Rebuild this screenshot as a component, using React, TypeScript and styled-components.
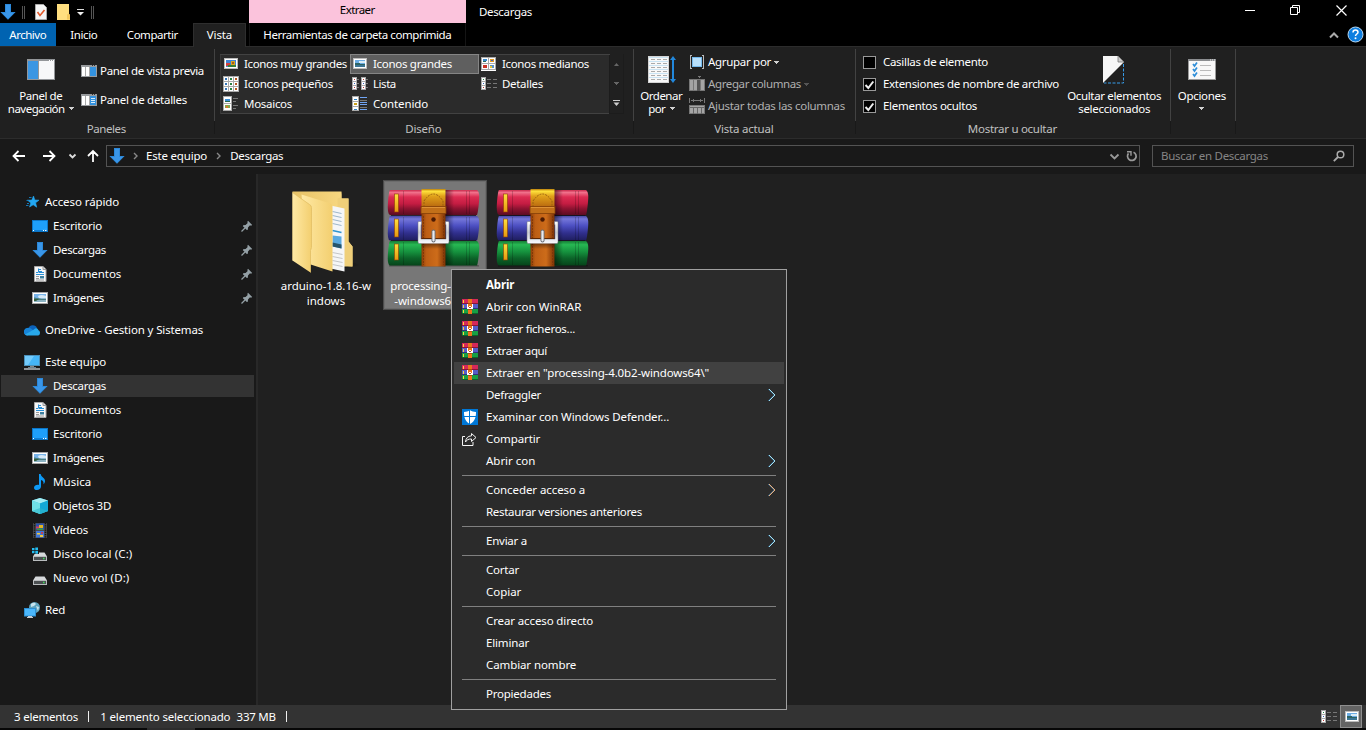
import React, { useLayoutEffect, useRef } from 'react';
import styled, { createGlobalStyle, css } from 'styled-components';

const Global = createGlobalStyle`
  * { box-sizing: border-box; }
  html, body { margin: 0; padding: 0; background: #000; overflow: hidden; }
  svg { display: block; flex: none; }
`;

/* ---------- text ---------- */

const TextSpan = styled.span<{ $color?: string; $bold?: boolean }>`
  display: inline-block;
  white-space: pre;
  color: ${(p) => p.$color || 'inherit'};
  font-weight: ${(p) => (p.$bold ? 700 : 400)};
`;

/* Tracks its text so that it spans the given width. */
function Text({ w, children, color, bold }: { w: number; children: string; color?: string; bold?: boolean }) {
  const ref = useRef<HTMLSpanElement>(null);
  useLayoutEffect(() => {
    const el = ref.current;
    if (!el) return;
    el.style.letterSpacing = '0px';
    el.style.marginRight = '0px';
    const gap = (w + 0.3 - el.getBoundingClientRect().width) / Math.max(1, children.length - 1);
    el.style.letterSpacing = `${gap}px`;
    el.style.marginRight = `${-gap}px`;
  }, [w, children]);
  return <TextSpan ref={ref} $color={color} $bold={bold}>{children}</TextSpan>;
}

/* ---------- icons ---------- */

const DownArrow = ({ size = 16 }: { size?: number }) => (
  <svg width={size} height={size} viewBox="0 0 16 16">
    <path d="M5 0h6v8h4.6L8 15.8.4 8H5z" fill="#3a96e8" />
    <path d="M5.5.5h5v8h4L8 15 1.500 8.500h4z" fill="none" stroke="#2583d2" strokeWidth="0.7" />
  </svg>
);

const Star = () => (
  <svg width="16" height="16" viewBox="0 0 16 16">
    <path d="M9.500 2l1.300 4 4.200.2-3.400 2.600 1.100 4.400-3.500-2.400-3.700 2.200 1.300-4.100L3.600 6.200l4.200-.1z" fill="#22a7f2" stroke="#22a7f2" strokeWidth=".6" />
    <path d="M5 3.500h2.500M2.500 6.500h2M3 9.500h2M2 11.500h2.500" stroke="#1476b4" strokeWidth="1" />
  </svg>
);

const Desktop = () => (
  <svg width="16" height="16" viewBox="0 0 16 16">
    <rect x="0.500" y="2.500" width="15" height="11" fill="#1e9ffa" stroke="#0b76c8" />
    <path d="M15 3v7L5 13H15z" fill="#38acff" opacity=".5" />
    <path d="M1 12.500h14" stroke="#0f7ed4" />
    <path d="M1 12.500h1M11 12.500h1M13 12.500h1.500" stroke="#fff" />
  </svg>
);

const Doc = () => (
  <svg width="16" height="16" viewBox="0 0 16 16">
    <path d="M2.500.5h8.500l3 3v12H2.500z" fill="#f7f7f7" stroke="#a9a9a9" />
    <path d="M11 .5v3h3" fill="#ddd" stroke="#999" />
    <path d="M4 6.500h2M7 3.500h2M6 5.500h4M7 6.500h5M4 8.500h8" stroke="#2a8fd6" />
    <path d="M6.500 2.500v4" stroke="#2a8fd6" strokeWidth="1" />
    <path d="M4 10.500h3M4 12.500h3M4 14h8" stroke="#9a9a9a" />
    <path d="M8 10h4v2.500H8z" fill="#3d7f9f" />
  </svg>
);

const Picture = () => (
  <svg width="16" height="16" viewBox="0 0 16 16">
    <rect x="0.500" y="2.500" width="15" height="11" fill="#fff" stroke="#a8a8a8" />
    <rect x="2" y="4" width="12" height="8" fill="#79b4ea" />
    <path d="M6 6q3-2 8 0v2.500H7z" fill="#d7eaf8" />
    <path d="M2 7.500c3 0 4 1.500 12 1.200V10H2z" fill="#4b7d80" />
    <path d="M2 10h12v2H2z" fill="#8db4c4" />
    <path d="M2 9h5l-3 2H2z" fill="#345f3d" />
  </svg>
);

const Music = () => (
  <svg width="16" height="16" viewBox="0 0 16 16">
    <path d="M7 0h1.700c.2 3.200 4.600 3.800 4.300 7.200-.1 1.400-.8 2.300-1.500 3 .4-2.300-.4-3.700-2.500-4.300v6.600C9 14.800 7 16 5 16c-1.800 0-3-.9-3-2.300 0-2 2.500-3.300 5-2.800z" fill="#0d99f5" />
  </svg>
);

const Cube = () => (
  <svg width="16" height="16" viewBox="0 0 16 16">
    <path d="M8 0l8 2.500v10.500L8 16 0 13V2.500z" fill="#37c3dc" />
    <path d="M8 0l8 2.500L8 5.500 0 2.500z" fill="#a5edf3" />
    <path d="M0 2.500l8 3V16l-8-3z" fill="#6fe0e6" />
    <path d="M16 2.500l-8 3V16l8-3z" fill="#13a9d6" />
    <path d="M0 13l8-3 8 3-8 3z" fill="#2fb5c9" opacity=".6" />
  </svg>
);

const Film = () => (
  <svg width="16" height="16" viewBox="0 0 16 16">
    <rect x="1" y="1" width="14" height="15" fill="#4b4b4b" />
    <path d="M2.500 1v15M13.500 1v15" stroke="#111" strokeWidth="1.500" strokeDasharray="1.200 1" />
    <rect x="4" y="1.500" width="8" height="6.500" fill="#2a51ad" />
    <rect x="4" y="9" width="8" height="6.500" fill="#3f77d8" />
    <path d="M4 4.500h3v2H4z" fill="#d23a62" /><path d="M7 3h4v3H7z" fill="#e2b422" /><path d="M5 6.500h6V8H5z" fill="#3b9a42" />
    <path d="M5 11h3v1.500H5zM8 13h3v2H8z" fill="#f0c83a" /><path d="M9 10h2v2H9z" fill="#c44055" />
  </svg>
);

const Drive = ({ windows }: { windows?: boolean }) => (
  <svg width="16" height="16" viewBox="0 0 16 16">
    <path d="M3.500 6.500h9L15 10.500H1z" fill="#d6d9db" />
    <rect x="1.500" y="10.500" width="13" height="4" fill="#4c5052" stroke="#b9bcbe" />
    <path d="M11 12.500h1.500" stroke="#3ee05a" strokeWidth="1.300" />
    {windows && (
      <>
        <rect x="0" y="1" width="7" height="7" fill="#191919" />
        <path d="M0 2h2.500v2.300H0zM3.300 1.500H6v2.800H3.300zM0 5h2.500v2.300H0zM3.300 5H6v2.700H3.300z" fill="#25bdf0" />
      </>
    )}
  </svg>
);

const Network = () => (
  <svg width="16" height="16" viewBox="0 0 16 16">
    <circle cx="10.500" cy="5.500" r="5.500" fill="#5da3bd" />
    <path d="M7 2q3-2.500 5 0l-2 2-3 1zM12 4l3 1-1 4z" fill="#c8e4ee" />
    <rect x="0.500" y="6.500" width="11" height="7.500" fill="#4bb7fb" stroke="#2d8fd2" />
    <path d="M4 14.500h4M3 15.500h6" stroke="#c7ccd0" />
  </svg>
);

const Monitor = () => (
  <svg width="16" height="16" viewBox="0 0 16 16">
    <rect x="0.500" y="1.500" width="15" height="10" fill="#45b5f8" stroke="#4b8fb8" />
    <path d="M1 2h9L4 11H1z" fill="#86d3fc" opacity=".7" />
    <path d="M6 12.500h4" stroke="#888" />
    <path d="M0 15h16" stroke="#c3cbd0" strokeWidth="1.400" />
    <path d="M4 13.500h8" stroke="#6c8290" />
  </svg>
);

const Cloud = () => (
  <svg width="16" height="16" viewBox="0 0 16 16">
    <path d="M4.500 6.500A4.500 4.500 0 0 1 13 6.200L12 9 6 10z" fill="#0b62ba" />
    <path d="M3 13.500A3.600 3.600 0 0 1 .3 8C1.500 5.500 5 5 7 6.500l5 4z" fill="#1784d8" />
    <path d="M10 7.500c1.500-2 4-1.200 4.400.8 2.200.6 2.200 4.700-.4 5.200H3L1 12.500z" fill="#28a8ea" />
  </svg>
);

const Pin = () => (
  <svg width="12" height="12" viewBox="0 0 12 12">
    <path d="M7 .8L11.200 5 10 5.700 9 5.300 7 7.500 6.800 9.800 5.800 10 1.900 6.200 2.200 5.200 4.600 5 6.700 3 6.300 2z" fill="#94a0a6" />
    <path d="M4 8L.5 11.500" stroke="#94a0a6" strokeWidth="1.300" />
  </svg>
);

/* Full-size archive: three books held by a buckled strap. */
const Archive = () => (
  <svg width="94" height="80" viewBox="0 0 94 80">
    <defs>
      <linearGradient id="red" x2="0" y2="1"><stop offset="0" stopColor="#c92a4c" /><stop offset=".1" stopColor="#f0708a" /><stop offset=".28" stopColor="#dc2c52" /><stop offset=".55" stopColor="#c41c42" /><stop offset=".75" stopColor="#8c1331" /><stop offset="1" stopColor="#5c0c22" /></linearGradient>
      <linearGradient id="blue" x2="0" y2="1"><stop offset="0" stopColor="#4a4ba6" /><stop offset=".12" stopColor="#7577da" /><stop offset=".4" stopColor="#4c4fc2" /><stop offset=".7" stopColor="#302f8c" /><stop offset="1" stopColor="#1f1e5e" /></linearGradient>
      <linearGradient id="green" x2="0" y2="1"><stop offset="0" stopColor="#167d34" /><stop offset=".15" stopColor="#27b853" /><stop offset=".45" stopColor="#15903d" /><stop offset=".7" stopColor="#0c6429" /><stop offset="1" stopColor="#06441a" /></linearGradient>
      <linearGradient id="strap"><stop offset="0" stopColor="#8d3e07" /><stop offset=".2" stopColor="#bd5e14" /><stop offset=".65" stopColor="#cd6c1a" /><stop offset="1" stopColor="#7b3205" /></linearGradient>
      <linearGradient id="gold" x2="0" y2="1"><stop offset="0" stopColor="#b87a08" /><stop offset=".12" stopColor="#ffe23c" /><stop offset=".4" stopColor="#e0a01a" /><stop offset="1" stopColor="#b9690f" /></linearGradient>
      <linearGradient id="tag" x2="0" y2="1"><stop offset="0" stopColor="#ffe03e" /><stop offset="1" stopColor="#e6980e" /></linearGradient>
      <linearGradient id="shade" x2="0" y2="1"><stop offset="0" stopColor="#000" stopOpacity=".4" /><stop offset="1" stopColor="#000" stopOpacity="0" /></linearGradient>
      <linearGradient id="side"><stop offset="0" stopColor="#000" stopOpacity=".5" /><stop offset="1" stopColor="#000" stopOpacity="0" /></linearGradient>
      <linearGradient id="steel" x2="0" y2="1"><stop offset="0" stopColor="#fff" /><stop offset=".5" stopColor="#c9ccd4" /><stop offset="1" stopColor="#fafbff" /></linearGradient>
    </defs>
    <rect x="2" y="77" width="90" height="2.500" rx="1" fill="url(#shade)" />
    <path d="M3 2h87q3 1.500 2 12t-2 13H3Q0 26 1 14T3 2z" fill="url(#red)" />
    <path d="M3 28h87q3 1.500 2 12t-2 12.500H3Q0 52 1 40T3 28z" fill="url(#blue)" />
    <path d="M3 53h87q3 1.500 2 12t-2 12.500H3Q0 77 1 65T3 53z" fill="url(#green)" />
    <path d="M4 27.500h85M4 52.500h85" stroke="#151020" strokeOpacity=".8" />
    <path d="M16.500 3v23M79.500 3v23M82.500 3v23M16.500 29v23M79.500 29v23M82.500 29v23M16.500 54v23M79.500 54v23M82.500 54v23" stroke="#000" strokeOpacity=".18" />
    <g fill="url(#tag)" stroke="#8c3d06" strokeWidth=".6">
      <rect x="7.500" y="6" width="4" height="18" /><rect x="7.500" y="31" width="4" height="18" /><rect x="7.500" y="56" width="4" height="16" />
    </g>
    <rect x="58" y="2" width="9" height="75" fill="url(#side)" />
    <rect x="34.500" y="20" width="24" height="58.500" fill="url(#strap)" />
    <path d="M34.500 1h24v18h-24z" fill="url(#gold)" />
    <path d="M37 19V13q9.500-14 19 0v6" fill="none" stroke="#9c600f" strokeWidth="1" strokeDasharray="2 1" />
    <rect x="34" y="18.500" width="25" height="7" fill="#c27019" stroke="#844008" strokeWidth=".8" />
    <path d="M35 19.500h23" stroke="#eaa043" strokeOpacity=".7" />
    <path d="M36.500 28v49M56.500 28v49" stroke="#7a3407" strokeDasharray="2 1" strokeWidth=".8" />
    <circle cx="46.500" cy="31.500" r="2.200" fill="#4d1b03" />
    <path d="M34.500 33.500H32q-1 0-1 1V54q0 1.500 1.500 1.500h28Q62 55.500 62 54V34.500q0-1-1-1h-2.500v3h.5V51h-25V36.500h.5z" fill="url(#steel)" stroke="#70757f" strokeWidth=".5" />
    <path d="M34.500 50.500h24" stroke="#5f2702" strokeWidth="1" />
    <path d="M46.500 43.500v9" stroke="#676b72" strokeWidth="4" strokeLinecap="round" />
    <path d="M46.500 43.500v9" stroke="#e9ebf0" strokeWidth="2.200" strokeLinecap="round" />
    <path d="M34.500 56h24v5h-24z" fill="url(#shade)" />
  </svg>
);

const MiniArchive = () => (
  <svg width="16" height="16" viewBox="0 0 16 16" shapeRendering="crispEdges">
    <rect y="0" width="16" height="5" fill="#d6285a" /><rect y="4" width="16" height="1" fill="#8d1537" />
    <rect y="5" width="16" height="5" fill="#565cc8" /><rect y="9" width="16" height="1" fill="#32307c" />
    <rect y="10" width="16" height="5" fill="#17a045" /><rect y="14" width="16" height="1" fill="#0b6529" />
    <path d="M1 1h1v3H1zM1 6h1v3H1zM1 11h1v3H1z" fill="#ffd23c" />
    <rect x="6" y="0" width="4" height="15" fill="#ed741c" />
    <path d="M6 4h4v1H6zM6 10h4v1H6z" fill="#b04b10" />
    <path d="M5 5h1v3h1V7h2v1h1V5h1v5H5z" fill="#fff" />
    <path d="M7 8h2v1H7z" fill="#a0522a" />
  </svg>
);

const Folder = () => (
  <svg width="72" height="86" viewBox="-1.500 -2.500 72 86">
    <defs>
      <linearGradient id="f1"><stop offset="0" stopColor="#ffe9a4" /><stop offset="1" stopColor="#f3cf70" /></linearGradient>
      <linearGradient id="f2"><stop offset="0" stopColor="#e7c266" /><stop offset="1" stopColor="#fbdc86" /></linearGradient>
      <linearGradient id="f3"><stop offset="0" stopColor="#000" stopOpacity=".5" /><stop offset="1" stopColor="#000" stopOpacity="0" /></linearGradient>
    </defs>
    <path d="M50 78l20-3-6-3z" fill="url(#f3)" />
    <path d="M2 1h49v7h7v43l4 5v20l-60-6z" fill="url(#f2)" />
    <path d="M51 1v7h7v43l4 5v20H47V8l3-1z" fill="#efcf79" />
    <path d="M40 15l14 3v63l-14-3z" fill="#f5f6f7" />
    <path d="M42 21l9 2M42 25l9 2M42 29l9 2M42 33l9 2" stroke="#9db6ca" strokeWidth="1" />
    <path d="M42 40l9 2" stroke="#2f94d0" strokeWidth="1.500" />
    <path d="M42 45l9 1v12l-9-2z" fill="#5aa9df" /><path d="M42 52l9 2v4l-9-2z" fill="#27556b" />
    <path d="M42 62l10 2M42 66l10 2M42 70l10 2M42 74l10 2" stroke="#c4c6c8" />
    <path d="M11 4l29 9q2 1 2 3v65l-25-8z" fill="url(#f1)" />
    <path d="M2 2l17 12q2 1 2 3v40l-1 3v22L2 70z" fill="url(#f1)" />
    <path d="M2 2l17 12q2 1 2 3v40l-1 3v22" fill="none" stroke="#e2bf64" strokeWidth=".8" />
  </svg>
);

const WinFrame = ({ mode }: { mode: 'preview' | 'details' }) => (
  <svg width="16" height="12" viewBox="0 0 16 12" shapeRendering="crispEdges">
    <rect width="16" height="12" fill="#989b9e" />
    <rect x="1" y="2" width="14" height="9" fill="#fff" />
    <path d="M4 2h1v9H4zM8 2h1v9H8z" fill="#aaa" />
    <rect x="9" y="2" width="6" height="9" fill="#3392df" />
    {mode === 'details' && <path d="M10 4.500h4M10 6.500h4M10 8.500h4" stroke="#d9ecfb" />}
    <path d="M11 .5h1M13 .5h1" stroke="#333" />
  </svg>
);

const NavPane = () => (
  <svg width="28" height="21" viewBox="0 0 28 21" shapeRendering="crispEdges">
    <rect width="28" height="21" fill="#939699" />
    <rect x="1" y="2" width="10" height="18" fill="#3a96e3" />
    <rect x="12" y="2" width="15" height="18" fill="#f7f8f9" />
    <path d="M22 1h1M24 1h1M26 1h1" stroke="#fff" />
  </svg>
);

const Tile = ({ x, y, c = '#3c7ea8' }: { x: number; y: number; c?: string }) => (
  <g><rect x={x + 0.5} y={y + 0.5} width="5" height="5" fill="#fff" stroke="#aaa" /><rect x={x + 2} y={y + 2} width="2" height="2" fill={c} /></g>
);

const GalleryIcon = ({ kind }: { kind: string }) => (
  <svg width="16" height="16" viewBox="0 0 16 16" shapeRendering="crispEdges">
    {(kind === 'xl' || kind === 'large') && (
      <>
        <rect x="1.500" y="2.500" width="13" height="10" fill="#fff" stroke="#bbb" />
        <rect x="3" y="4" width="10" height="7" fill={kind === 'xl' ? '#3f83d4' : '#6cace4'} />
        {kind === 'xl' ? (
          <><path d="M3 7h4v3H3z" fill="#d13f3d" /><path d="M8 5h4v4H8z" fill="#d9a61b" /><path d="M9 6h2v2H9z" fill="#a4571c" /><path d="M5 9h8v2H5z" fill="#357c36" /></>
        ) : (
          <><path d="M7 5h6v2H7z" fill="#d9ecf7" /><path d="M3 7h5v1h5v1H3z" fill="#2d6464" /><path d="M3 9h10v2H3z" fill="#3b7595" /></>
        )}
      </>
    )}
    {kind === 'medium' && (
      <>
        <rect width="15" height="14" y="1" fill="#fff" /><path d="M.5 1.500h14v12H.5zM7.500 1v13M0 7.500h15" fill="none" stroke="#aaa" />
        <path d="M2 3h4v2H2z" fill="#3c8bce" /><path d="M2 5h3v1H2z" fill="#2b6b5a" /><path d="M9 3h4v3H9z" fill="#e09b28" /><path d="M10 4h2v1h-2z" fill="#3c63c0" />
        <path d="M2 9h4v3H2z" fill="#c93224" /><path d="M9 9h4v3H9z" fill="#5b93c9" /><path d="M9 10h2v2H9z" fill="#e5c535" />
      </>
    )}
    {kind === 'small' && [0, 5, 10].map((y) => [0, 5, 10].map((x) => <Tile key={`${x}-${y}`} x={x} y={y} c={x === 10 ? '#b8551f' : x === 5 ? '#2c8244' : '#3475b7'} />))}
    {kind === 'list' && (
      <>
        {[0, 9].map((x) => (
          <g key={x}><rect x={x + 0.5} y="1.500" width="4" height="12" fill="#fff" stroke="#aaa" /><path d={`M${x + 1} 5.500h4M${x + 1} 9.500h4`} stroke="#aaa" />
            <path d={`M${x + 2} 3.500h1M${x + 2} 11.500h1`} stroke="#b33" /><path d={`M${x + 2} 7.500h1`} stroke="#36b" /><path d={`M${x + 5} 3.500h2M${x + 5} 7.500h2M${x + 5} 11.500h2`} stroke="#777" /></g>
        ))}
      </>
    )}
    {kind === 'details' && (
      <>
        <rect x="0.500" y="1.500" width="4" height="12" fill="#fff" stroke="#aaa" /><path d="M1 5.500h4M1 9.500h4" stroke="#aaa" />
        <path d="M2 3.500h1" stroke="#284" /><path d="M2 7.500h1" stroke="#36b" /><path d="M2 11.500h1" stroke="#b33" />
        <path d="M6 3.500h4M12 3.500h4M6 7.500h4M12 7.500h4M6 11.500h4M12 11.500h4" stroke="#777" />
      </>
    )}
    {kind === 'tiles' && (
      <>
        <rect x="0.500" y="0.500" width="8" height="14" fill="#fff" stroke="#aaa" /><path d="M1 7.500h8" stroke="#aaa" />
        <path d="M2 3h5v2H2z" fill="#3d91d6" /><path d="M2 5h5v1H2z" fill="#2c6b48" /><path d="M2 9h5v3H2z" fill="#83a94a" /><path d="M3 10h2v2H3z" fill="#db7b31" />
        <path d="M10 2.500h5M10 5.500h3M10 9.500h5M10 12.500h3" stroke="#777" />
      </>
    )}
    {kind === 'content' && (
      <>
        <rect x="0.500" y="0.500" width="6" height="14" fill="#fff" stroke="#aaa" /><path d="M1 5.500h6M1 10.500h6" stroke="#aaa" />
        <path d="M2 3h3M2 13h3" stroke="#2c82c4" /><path d="M2 8h3" stroke="#c9a21e" strokeWidth="2" />
        <path d="M8 1.500h7M8 6.500h7M8 8.500h7M8 13.500h7" stroke="#70a5f5" /><path d="M8 4.500h7M8 11.500h7" stroke="#777" />
      </>
    )}
  </svg>
);

const SortIcon = () => (
  <svg width="28" height="28" viewBox="0 0 28 28">
    <rect x="0.500" y="0.500" width="20" height="26" fill="#f8f8f8" stroke="#d5d5d5" />
    {[2, 6, 10, 14, 18, 22].map((y) => (
      <g key={y} shapeRendering="crispEdges">
        <path d={`M1 ${y - 0.5}h19`} stroke="#c9e3f3" />
        <path d={`M3 ${y + 1.500}h4M9 ${y + 1.500}h4M15 ${y + 1.500}h4`} stroke="#aaa" />
      </g>
    ))}
    <path d="M25 2v23" stroke="#2288dc" strokeWidth="2" />
    <path d="M25 0l3 4h-6zM25 27l3-4h-6z" fill="#2288dc" />
  </svg>
);

const GroupIcon = () => (
  <svg width="16" height="14" viewBox="0 0 16 14" shapeRendering="crispEdges">
    <path d="M3 .5H1.500v13H3M13 .5h1.500v13H13" fill="none" stroke="#bbb" />
    <rect x="3.500" y="2.500" width="9" height="9" fill="#b9e0fb" stroke="#75b9ec" />
  </svg>
);
const AddColIcon = () => (
  <svg width="16" height="16" viewBox="0 0 16 16" shapeRendering="crispEdges">
    <rect x="0.500" y="3.500" width="15" height="11" fill="#a4a4a4" stroke="#777" />
    <path d="M4.500 4v11M11.500 4v11" stroke="#777" /><path d="M8 4h3v11H8z" fill="#555" />
    <path d="M8 0h4l-2 2z" fill="#777" />
  </svg>
);
const FitColIcon = () => (
  <svg width="16" height="16" viewBox="0 0 16 16" shapeRendering="crispEdges">
    <path d="M.5 0v5M15.500 0v5M2 2.500h12M4.500 1v3M11.500 1v3" stroke="#777" />
    <rect x="0.500" y="7.500" width="15" height="8" fill="#a4a4a4" stroke="#777" /><path d="M1 9.500h14M4.500 10v6M8.500 10v6M12.500 10v6" stroke="#666" />
  </svg>
);

const HideIcon = () => (
  <svg width="22" height="28" viewBox="0 0 22 28">
    <path d="M0 0h15l6 6L1 26l-1 1z" fill="#f6f6f6" />
    <path d="M15 0v6h6z" fill="#ccc" stroke="#777" strokeWidth=".8" />
    <path d="M20.500 8v19H1" fill="none" stroke="#369be8" strokeDasharray="3 1.500" />
  </svg>
);

const OptionsIcon = () => (
  <svg width="28" height="21" viewBox="0 0 28 21">
    <rect x="0.500" y="0.500" width="27" height="20" fill="#f8f8f8" stroke="#9b9b9b" />
    <path d="M0 1h28" stroke="#8b8d90" strokeWidth="2" /><path d="M22 1h1M24 1h1M26 1h1" stroke="#eee" />
    <path d="M5 5l1.500 2L9 3.500M5 10l1.500 2L9 8.500M5 15l1.500 2L9 13.500" stroke="#2f8ed8" strokeWidth="1.700" fill="none" />
    <path d="M12 6.500h11M12 11.500h11M12 16.500h11" stroke="#bbb" />
  </svg>
);

const Caret = ({ color = '#d0d0d0' }: { color?: string }) => (
  <svg width="5" height="3" viewBox="0 0 5 3" shapeRendering="crispEdges"><path d="M0 0h5v1H4v1H3v1H2V2H1V1H0z" fill={color} /></svg>
);

const Shield = () => (
  <svg width="16" height="16" viewBox="0 0 16 16">
    <rect width="16" height="16" fill="#0078d7" />
    <path d="M8 1.300c2 1.300 3.500 1.600 6 1.600 0 5-.8 9.200-6 12C2.800 12.100 2 7.900 2 2.900 4.500 2.900 6 2.600 8 1.300z" fill="#fff" />
    <path d="M7.500 1v14M1 7.500h14" stroke="#0078d7" />
  </svg>
);
const ShareIcon = () => (
  <svg width="16" height="16" viewBox="0 0 16 16" fill="none" stroke="#f5f5f5">
    <path d="M3 5.500H.5v9h10.500V11" />
    <path d="M9.500 2.500L14 6.500l-4.500 4V8C6.500 7.800 4.500 9 3.500 11c.2-3.500 2.200-6 6-6.200z" />
  </svg>
);
const Chevron = ({ warm }: { warm?: boolean }) => (
  <svg width="8" height="14" viewBox="0 0 8 14" fill="none">
    <path d="M.5 1L6.500 7l-6 6" stroke={warm ? '#62a8df' : '#3d8fc8'} />
    <path d="M1 1L7 7l-6 6" stroke={warm ? '#efb07a' : '#a7e2f2'} />
  </svg>
);
const CrumbArrow = () => (
  <svg width="6" height="8" fill="none"><path d="M1 1l3 3-3 3" stroke="#888" strokeWidth="1.400" /></svg>
);

/* ---------- window frame ---------- */

const Window = styled.div`
  position: relative;
  width: 1366px;
  height: 730px;
  display: flex;
  flex-direction: column;
  background: #000;
  color: #fff;
  font: 11.5px/16px "Noto Sans", "Open Sans", sans-serif;
`;

const TitleBar = styled.header`
  display: flex;
  height: 23px;
  flex: none;
`;
const QuickBar = styled.div`
  display: flex;
  align-items: center;
  width: 249px;
  padding-top: 1px;
  gap: 6px;
`;
const Grip = styled.i`
  width: 3px;
  height: 13px;
  border: solid #555;
  border-width: 0 1px;
  margin-right: 1px;
`;
const ContextTab = styled.div`
  width: 217px;
  background: #fbc3dc;
  color: #000;
  text-align: center;
  padding-top: 2px;
`;
const WindowTitle = styled.div`
  flex: 1;
  padding: 4px 0 0 13px;
`;
const Controls = styled.div`
  display: flex;
  gap: 35px;
  padding: 5px 19px 0 0;
`;

const TabBar = styled.nav`
  display: flex;
  height: 23px;
  flex: none;
`;
const Tab = styled.div<{ $w: number; $kind?: 'file' | 'active' | 'context' }>`
  width: ${(p) => p.$w}px;
  height: 23px;
  text-align: center;
  padding-top: 4px;
  ${(p) => p.$kind === 'file' && css`background: #0063b1;`}
  ${(p) => p.$kind === 'active' && css`
    height: 24px;
    background: #202020;
    border: solid #2e2e2e;
    border-width: 1px 1px 0;
    padding-top: 3px;
    z-index: 1;
  `}
  ${(p) => p.$kind === 'context' && css`
    margin-left: 3px;
    border: solid #151515;
    border-width: 0 1px;
  `}
`;
const TabTools = styled.div`
  display: flex;
  align-items: center;
  gap: 8px;
  margin-left: auto;
  padding-right: 2px;
`;

/* ---------- ribbon ---------- */

const Ribbon = styled.section`
  display: flex;
  height: 93px;
  flex: none;
  background: #202020;
  border: solid #2c2c2c;
  border-width: 1px 0;
`;
const Group = styled.div<{ $w: number }>`
  display: flex;
  flex-direction: column;
  width: ${(p) => p.$w}px;
  height: 91px;
  padding-top: 2px;
  background: linear-gradient(#424242, #424242) right 2px / 1px 72px no-repeat,
    linear-gradient(#191919, #191919) right 74px / 1px 13px no-repeat;
`;
const GroupBody = styled.div`
  display: flex;
  height: 71px;
`;
const GroupName = styled.div`
  text-align: center;
  color: #c0c0c0;
  padding: 1px 2px 0 0;
`;
const BigButton = styled.div<{ $w: number; $top?: number; $left?: number }>`
  width: ${(p) => p.$w}px;
  margin-left: ${(p) => p.$left ?? 0}px;
  padding-top: ${(p) => p.$top ?? 7}px;
  display: flex;
  flex-direction: column;
  align-items: center;
`;
const BigCaption = styled.div<{ $gap: number }>`
  margin-top: ${(p) => p.$gap}px;
  display: flex;
  flex-direction: column;
  align-items: center;
  line-height: 13px;
`;
const CaptionLine = styled.div`
  display: flex;
  align-items: center;
  gap: 4px;
  height: 13px;
`;
const Stack = styled.div<{ $left: number; $top: number; $row: number }>`
  display: flex;
  flex-direction: column;
  padding: ${(p) => p.$top}px 0 0 ${(p) => p.$left}px;
  & > div { height: ${(p) => p.$row}px; }
`;
const Command = styled.div<{ $gap: number; $dim?: boolean }>`
  display: flex;
  align-items: center;
  gap: ${(p) => p.$gap}px;
  color: ${(p) => (p.$dim ? '#b0b0b0' : '#fff')};
`;
const Gallery = styled.div`
  display: grid;
  grid-template-columns: 130px 129px 130px;
  grid-auto-rows: 20px;
  width: 390px;
  height: 60px;
  margin: 5px 0 0 5px;
  background: #2b2b2b;
  box-shadow: inset 0 1px #424242, inset 1px 0 #383838, inset -1px 0 #1c1c1c, inset 0 -1px #424242;
`;
const GalleryItem = styled.div<{ $on?: boolean }>`
  display: flex;
  align-items: center;
  gap: 5px;
  padding-left: 2px;
  &:nth-child(3n + 1) { padding-left: 3px; }
  ${(p) => p.$on && css`background: #5f5f5f; box-shadow: inset 0 0 0 1px #858585;`}
`;
const GalleryScroll = styled.div`
  display: flex;
  flex-direction: column;
  justify-content: space-between;
  align-items: center;
  width: 14px;
  margin: 5px 0 0 0;
  padding: 9px 0 7px;
  height: 60px;
  border: solid #1c1c1c;
  border-width: 0 1px 1px 0;
`;
const Check = styled.span`
  width: 13px;
  height: 13px;
  background: #000;
  border: 1px solid #999;
  display: grid;
  place-items: center;
`;

function CheckRow({ w, on, children }: { w: number; on?: boolean; children: string }) {
  return (
    <Command $gap={7}>
      <Check>
        {on && <svg width="11" height="11" viewBox="0 0 11 11"><path d="M1.500 6l2.800 3L9.300 2.500" stroke="#eee" strokeWidth="2" fill="none" /></svg>}
      </Check>
      <Text w={w}>{children}</Text>
    </Command>
  );
}

/* ---------- address row ---------- */

const NavRow = styled.section`
  display: flex;
  align-items: center;
  height: 35px;
  flex: none;
  background: #191919;
  padding: 0 0 2px 12px;
`;
const NavButtons = styled.div`
  width: 94px;
`;
const Field = styled.div<{ $w: number; $ml?: number; $pl: number; $pr: number }>`
  display: flex;
  align-items: center;
  width: ${(p) => p.$w}px;
  height: 22px;
  margin-left: ${(p) => p.$ml ?? 0}px;
  padding: 0 ${(p) => p.$pr}px 0 ${(p) => p.$pl}px;
  border: 1px solid #535353;
`;
const Crumb = styled.span<{ $l: number }>`
  display: flex;
  padding-left: ${(p) => p.$l}px;
`;
const Push = styled.span`
  margin-left: auto;
  display: flex;
`;

/* ---------- body ---------- */

const Body = styled.main`
  display: flex;
  height: 531px;
  flex: none;
`;
const Sidebar = styled.aside`
  width: 258px;
  padding: 16px 0 0 1px;
  background: #191919;
  border-right: 2px solid #282828;
`;
const TreeItem = styled.div<{ $child?: boolean; $on?: boolean; $gap?: boolean }>`
  display: flex;
  align-items: center;
  gap: 5px;
  width: 254px;
  height: 24px;
  margin-top: ${(p) => (p.$gap ? 8 : 0)}px;
  padding: 0 2px 0 ${(p) => (p.$child ? 31 : 23)}px;
  ${(p) => p.$on && css`background: linear-gradient(#333, #333) 0 1px / 253px 22px no-repeat;`}
`;
const Files = styled.section`
  flex: 1;
  display: flex;
  gap: 5px;
  padding: 6px 0 0 16px;
  background: #202020;
`;
const FileTile = styled.div<{ $on?: boolean }>`
  width: 104px;
  height: 130px;
  display: flex;
  flex-direction: column;
  align-items: center;
  ${(p) => p.$on && css`background: #777; box-shadow: inset 0 0 0 1px #4c4c4c, inset 0 0 0 2px #6c6c6c;`}
`;
const Thumb = styled.div`
  height: 98px;
  padding: 8px 2px 0 0;
`;
const FileName = styled.div`
  display: flex;
  flex-direction: column;
  align-items: center;
  line-height: 15px;
`;

const StatusBar = styled.footer`
  display: flex;
  align-items: center;
  height: 23px;
  flex: none;
  background: #333;
  padding-left: 14px;
`;
const StatusSep = styled.i`
  width: 1px;
  height: 11px;
  margin: 0 11px 0 10px;
  background: #eee;
`;
const StatusSize = styled.span`
  display: flex;
  margin-left: 6px;
`;
const ViewSwitch = styled.div`
  margin-left: auto;
  display: flex;
  align-items: center;
  gap: 3px;
`;
const ViewOn = styled.div`
  display: grid;
  place-items: center;
  width: 22px;
  height: 23px;
  margin-right: 4px;
  padding-left: 1px;
  background: #646464;
  border: 1px solid #8e8e8e;
`;
const Edge = styled.div`
  height: 2px;
  background: linear-gradient(#2c2c2c, #2c2c2c) 147px 0 / 48px 2px no-repeat #070707;
`;

/* ---------- context menu ---------- */

const Menu = styled.div`
  position: absolute;
  left: 451px;
  top: 269px;
  width: 336px;
  height: 441px;
  padding: 4px 2px;
  background: #2b2b2b;
  border: 1px solid #a0a0a0;
`;
const MenuItem = styled.div<{ $on?: boolean }>`
  display: flex;
  align-items: center;
  height: 22px;
  padding: 0 8px;
  background: ${(p) => (p.$on ? '#414141' : 'transparent')};
`;
const MenuIcon = styled.span`
  width: 24px;
`;
const MenuLine = styled.hr`
  height: 1px;
  margin: 3px 8px;
  border: 0;
  background: #808080;
`;

type Entry = { t: string; w: number; icon?: React.ReactNode; sub?: boolean; warm?: boolean; on?: boolean; bold?: boolean } | null;
const menu: Entry[] = [
  { t: 'Abrir', w: 28, bold: true },
  { t: 'Abrir con WinRAR', w: 95, icon: <MiniArchive /> },
  { t: 'Extraer ficheros...', w: 89, icon: <MiniArchive /> },
  { t: 'Extraer aquí', w: 61, icon: <MiniArchive /> },
  { t: 'Extraer en "processing-4.0b2-windows64\\"', w: 223, icon: <MiniArchive />, on: true },
  { t: 'Defraggler', w: 55, sub: true },
  { t: 'Examinar con Windows Defender...', w: 183, icon: <Shield /> },
  { t: 'Compartir', w: 54, icon: <ShareIcon /> },
  { t: 'Abrir con', w: 49, sub: true },
  null,
  { t: 'Conceder acceso a', w: 99, sub: true, warm: true },
  { t: 'Restaurar versiones anteriores', w: 156 },
  null,
  { t: 'Enviar a', w: 41, sub: true },
  null,
  { t: 'Cortar', w: 33 },
  { t: 'Copiar', w: 35 },
  null,
  { t: 'Crear acceso directo', w: 107 },
  { t: 'Eliminar', w: 43 },
  { t: 'Cambiar nombre', w: 90 },
  null,
  { t: 'Propiedades', w: 65 },
];

const tree: { t: string; w: number; icon: React.ReactNode; child?: boolean; pin?: boolean; on?: boolean; gap?: boolean }[] = [
  { t: 'Acceso rápido', w: 74, icon: <Star /> },
  { t: 'Escritorio', w: 49, icon: <Desktop />, child: true, pin: true },
  { t: 'Descargas', w: 53, icon: <DownArrow />, child: true, pin: true },
  { t: 'Documentos', w: 68, icon: <Doc />, child: true, pin: true },
  { t: 'Imágenes', w: 51, icon: <Picture />, child: true, pin: true },
  { t: 'OneDrive - Gestion y Sistemas', w: 158, icon: <Cloud />, gap: true },
  { t: 'Este equipo', w: 61, icon: <Monitor />, gap: true },
  { t: 'Descargas', w: 53, icon: <DownArrow />, child: true, on: true },
  { t: 'Documentos', w: 68, icon: <Doc />, child: true },
  { t: 'Escritorio', w: 49, icon: <Desktop />, child: true },
  { t: 'Imágenes', w: 51, icon: <Picture />, child: true },
  { t: 'Música', w: 38, icon: <Music />, child: true },
  { t: 'Objetos 3D', w: 58, icon: <Cube />, child: true },
  { t: 'Vídeos', w: 35, icon: <Film />, child: true },
  { t: 'Disco local (C:)', w: 79, icon: <Drive windows />, child: true },
  { t: 'Nuevo vol (D:)', w: 76, icon: <Drive />, child: true },
  { t: 'Red', w: 20, icon: <Network />, gap: true },
];

const views = [
  ['xl', 'Iconos muy grandes', 103], ['large', 'Iconos grandes', 79], ['medium', 'Iconos medianos', 87],
  ['small', 'Iconos pequeños', 89], ['list', 'Lista', 23], ['details', 'Detalles', 41],
  ['tiles', 'Mosaicos', 48], ['content', 'Contenido', 55],
] as const;

export default function App() {
  return (
    <Window>
      <Global />
      <TitleBar>
        <QuickBar>
          <DownArrow />
          <Grip />
          <svg width="16" height="16" viewBox="0 0 16 16"><path d="M3.500.5h8l3 3v12h-11z" fill="#f5f5f5" stroke="#aaa" /><path d="M5.500 8L8 11.500 12.500 6" fill="none" stroke="#e35a2b" strokeWidth="1.600" /></svg>
          <svg width="16" height="16" viewBox="-1 0 16 16"><path d="M2 0h12v10l1 1v5H2z" fill="#ffdf7f" /><path d="M12 15.500v-5l1.500-.8 1.500 1v4.800z" fill="#f2c75c" /></svg>
          <svg width="9" height="7" viewBox="0 0 9 7"><path d="M1 .5h7" stroke="#ddd" /><path d="M1 3h7L4.500 6.500z" fill="#eee" /></svg>
          <Grip />
        </QuickBar>
        <ContextTab><Text w={35}>Extraer</Text></ContextTab>
        <WindowTitle><Text w={53}>Descargas</Text></WindowTitle>
        <Controls>
          <svg width="11" height="11"><path d="M1 5.500h10" stroke="#fff" /></svg>
          <svg width="11" height="11" fill="none" stroke="#fff"><path d="M.5 2.500h7v7h-7zM2.500 2V.5h7v7H8" /></svg>
          <svg width="11" height="11"><path d="M.5.500l10 10M10.500.500l-10 10" stroke="#fff" strokeWidth="1.200" /></svg>
        </Controls>
      </TitleBar>

      <TabBar>
        <Tab $w={56} $kind="file"><Text w={37}>Archivo</Text></Tab>
        <Tab $w={56}><Text w={27}>Inicio</Text></Tab>
        <Tab $w={81}><Text w={51}>Compartir</Text></Tab>
        <Tab $w={53} $kind="active"><Text w={25}>Vista</Text></Tab>
        <Tab $w={217} $kind="context"><Text w={188}>Herramientas de carpeta comprimida</Text></Tab>
        <TabTools>
          <svg width="10" height="8"><path d="M1 6.500l4-4 4 4" stroke="#aaa" strokeWidth="2" fill="none" /></svg>
          <svg width="17" height="17" viewBox="0 0 17 17">
            <circle cx="8.500" cy="8.500" r="7.500" fill="#0f7fe0" stroke="#b9d8f2" />
            <path d="M6 6.500c0-3.500 5-3.200 5-.3 0 1.800-2.500 1.800-2.500 3.800" fill="none" stroke="#fff" strokeWidth="1.500" /><circle cx="8.500" cy="12.300" r="1" fill="#fff" />
          </svg>
        </TabTools>
      </TabBar>

      <Ribbon>
        <Group $w={215}>
          <GroupBody>
            <BigButton $w={80} $left={1} $top={10}>
              <NavPane />
              <BigCaption $gap={9}>
                <CaptionLine><Text w={43}>Panel de</Text></CaptionLine>
                <CaptionLine><Text w={57}>navegación</Text><Caret /></CaptionLine>
              </BigCaption>
            </BigButton>
            <Stack $left={0} $top={7} $row={29}>
              <Command $gap={3}><WinFrame mode="preview" /><Text w={104}>Panel de vista previa</Text></Command>
              <Command $gap={3}><WinFrame mode="details" /><Text w={87}>Panel de detalles</Text></Command>
            </Stack>
          </GroupBody>
          <GroupName><Text w={39}>Paneles</Text></GroupName>
        </Group>

        <Group $w={419}>
          <GroupBody>
            <Gallery>
              {views.map(([k, t, w]) => (
                <GalleryItem key={k} $on={k === 'large'}><GalleryIcon kind={k} /><Text w={w}>{t}</Text></GalleryItem>
              ))}
            </Gallery>
            <GalleryScroll>
              <svg width="5" height="3"><path d="M0 3h5L2.500 0z" fill="#666" /></svg>
              <Caret color="#666" />
              <svg width="7" height="6"><path d="M0 .5h7" stroke="#ccc" /><path d="M.5 2.500h6L3.500 6z" fill="#ccc" /></svg>
            </GalleryScroll>
          </GroupBody>
          <GroupName><Text w={36}>Diseño</Text></GroupName>
        </Group>

        <Group $w={222}>
          <GroupBody>
            <BigButton $w={55}>
              <SortIcon />
              <BigCaption $gap={5}>
                <CaptionLine><Text w={42}>Ordenar</Text></CaptionLine>
                <CaptionLine><Text w={17}>por</Text><Caret /></CaptionLine>
              </BigCaption>
            </BigButton>
            <Stack $left={0} $top={2} $row={22}>
              <Command $gap={3}><GroupIcon /><Text w={63}>Agrupar por</Text><Caret /></Command>
              <Command $gap={3} $dim><AddColIcon /><Text w={93}>Agregar columnas</Text><Caret color="#555" /></Command>
              <Command $gap={3} $dim><FitColIcon /><Text w={137}>Ajustar todas las columnas</Text></Command>
            </Stack>
          </GroupBody>
          <GroupName><Text w={59}>Vista actual</Text></GroupName>
        </Group>

        <Group $w={315}>
          <GroupBody>
            <Stack $left={7} $top={2} $row={22}>
              <CheckRow w={105}>Casillas de elemento</CheckRow>
              <CheckRow w={176} on>Extensiones de nombre de archivo</CheckRow>
              <CheckRow w={94} on>Elementos ocultos</CheckRow>
            </Stack>
            <BigButton $w={96} $left={7}>
              <HideIcon />
              <BigCaption $gap={5}>
                <CaptionLine><Text w={94}>Ocultar elementos</Text></CaptionLine>
                <CaptionLine><Text w={72}>seleccionados</Text></CaptionLine>
              </BigCaption>
            </BigButton>
          </GroupBody>
          <GroupName><Text w={89}>Mostrar u ocultar</Text></GroupName>
        </Group>

        <Group $w={65}>
          <GroupBody>
            <BigButton $w={62} $top={10}>
              <OptionsIcon />
              <BigCaption $gap={9}>
                <CaptionLine><Text w={48}>Opciones</Text></CaptionLine>
                <CaptionLine><Caret /></CaptionLine>
              </BigCaption>
            </BigButton>
          </GroupBody>
        </Group>
      </Ribbon>

      <NavRow>
        <NavButtons>
          <svg width="90" height="14" viewBox="0 0 90 14" fill="none" stroke="#fff" strokeWidth="1.800">
            <path d="M13 7H2M6.500 2L1.500 7l5 5M31 7h11M37.500 2l5 5-5 5M81 13V2.500M76 7l5-5 5 5" />
            <path d="M57.500 5.500l3 3 3-3" stroke="#ddd" />
          </svg>
        </NavButtons>
        <Field $w={1034} $pl={2} $pr={1}>
          <DownArrow />
          <Crumb $l={8}><CrumbArrow /></Crumb>
          <Crumb $l={7}><Text w={61}>Este equipo</Text></Crumb>
          <Crumb $l={9}><CrumbArrow /></Crumb>
          <Crumb $l={8}><Text w={53}>Descargas</Text></Crumb>
          <Push>
            <svg width="29" height="14" viewBox="0 0 29 14" fill="none" stroke="#999">
              <path d="M1.500 5.500l4 4 4-4" strokeWidth="1.800" />
              <path d="M24.500 3.200a4.300 4.300 0 1 1-5 1.200" strokeWidth="1.700" /><path d="M18 2.700h4v4" strokeWidth="1.400" />
            </svg>
          </Push>
        </Field>
        <Field $w={202} $ml={12} $pl={8} $pr={8}>
          <Text w={107} color="#858585">Buscar en Descargas</Text>
          <Push><svg width="12" height="12" fill="none" stroke="#aaa"><circle cx="7.500" cy="4.500" r="3.300" strokeWidth="1.500" /><path d="M5 7L.8 11.200" strokeWidth="1.800" /></svg></Push>
        </Field>
      </NavRow>

      <Body>
        <Sidebar>
          {tree.map((n, i) => (
            <TreeItem key={i} $child={n.child} $on={n.on} $gap={n.gap}>
              {n.icon}
              <Text w={n.w}>{n.t}</Text>
              {n.pin && <Push><Pin /></Push>}
            </TreeItem>
          ))}
        </Sidebar>
        <Files>
          <FileTile>
            <Thumb><Folder /></Thumb>
            <FileName><Text w={90}>arduino-1.8.16-w</Text><Text w={38}>indows</Text></FileName>
          </FileTile>
          <FileTile $on>
            <Thumb><Archive /></Thumb>
            <FileName><Text w={89}>processing-4.0b2</Text><Text w={81}>-windows64.zip</Text></FileName>
          </FileTile>
          <FileTile>
            <Thumb><Archive /></Thumb>
          </FileTile>
        </Files>
      </Body>

      <StatusBar>
        <Text w={64}>3 elementos</Text>
        <StatusSep />
        <Text w={130}>1 elemento seleccionado</Text>
        <StatusSize><Text w={39}>337 MB</Text></StatusSize>
        <StatusSep />
        <ViewSwitch>
          <GalleryIcon kind="details" />
          <ViewOn><GalleryIcon kind="large" /></ViewOn>
        </ViewSwitch>
      </StatusBar>
      <Edge />

      <Menu>
        {menu.map((m, i) =>
          m ? (
            <MenuItem key={i} $on={m.on}>
              <MenuIcon>{m.icon}</MenuIcon>
              <Text w={m.w} bold={m.bold}>{m.t}</Text>
              {m.sub && <Push><Chevron warm={m.warm} /></Push>}
            </MenuItem>
          ) : (
            <MenuLine key={i} />
          ),
        )}
      </Menu>
    </Window>
  );
}
